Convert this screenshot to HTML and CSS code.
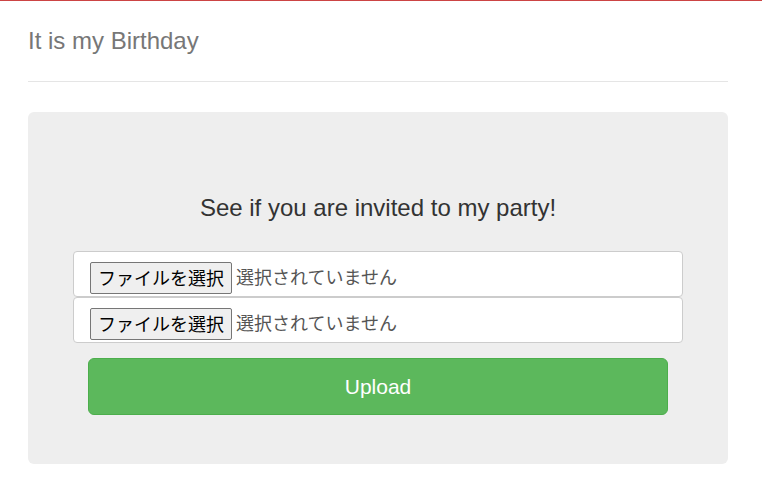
FILE: index.html
```html
<!DOCTYPE html>
<html lang="ja">
<head>
<meta charset="utf-8">
<title>It is my Birthday</title>
<link rel="stylesheet" href="styles.css">
</head>
<body>
<div class="container">
  <div class="header">
    <h3 class="brand">It is my Birthday</h3>
  </div>
  <div class="jumbotron">
    <p class="lead">See if you are invited to my party!</p>
    <form class="form">
      <div class="file-field">
        <span class="file-btn">ファイルを選択</span>
        <span class="file-name">選択されていません</span>
      </div>
      <div class="file-field">
        <span class="file-btn">ファイルを選択</span>
        <span class="file-name">選択されていません</span>
      </div>
      <button type="button" class="btn-upload">Upload</button>
    </form>
  </div>
</div>
</body>
</html>
```

FILE: styles.css
```css
html, body {
  margin: 0;
  padding: 0;
  background: #fff;
}
body {
  border-top: 1px solid #cc4444;
  font-family: "Liberation Sans", Arial, sans-serif;
  color: #333;
}
.container {
  margin: 0 34px 0 28px;
}
.header {
  padding: 20px 0;
  border-bottom: 1px solid #e5e5e5;
}
.brand {
  margin: 0;
  font-size: 24px;
  line-height: 40px;
  font-weight: normal;
  color: #777;
}
.jumbotron {
  margin-top: 30px;
  background: #eee;
  border-radius: 6px;
  padding: 81px 0 49px;
}
.lead {
  margin: 0 0 28px;
  text-align: center;
  font-size: 24px;
  line-height: 30px;
  color: #333;
}
.form {
  display: flex;
  flex-direction: column;
}
.file-field {
  margin: 0 45px;
  height: 46px;
  box-sizing: border-box;
  border: 1px solid #ccc;
  border-radius: 4px;
  background: #fff;
  padding: 10px 16px 0;
  display: flex;
  align-items: flex-start;
  gap: 4px;
  font-family: "Noto Sans CJK JP", "Liberation Sans", sans-serif;
  font-size: 18px;
}
.file-btn {
  box-sizing: border-box;
  height: 32px;
  width: 142px;
  padding-bottom: 3px;
  display: flex;
  align-items: center;
  justify-content: center;
  background: #efefef;
  border: 1px solid #767676;
  border-radius: 2px;
  color: #000;
  white-space: nowrap;
}
.file-name {
  line-height: 29px;
  color: #555;
  white-space: nowrap;
}
.btn-upload {
  margin: 15px 60px 0;
  height: 57px;
  padding-top: 2px;
  background: #5cb85c;
  border: 1px solid #4cae4c;
  border-radius: 6px;
  color: #fff;
  font-family: "Liberation Sans", Arial, sans-serif;
  font-size: 21px;
  cursor: pointer;
}
```
